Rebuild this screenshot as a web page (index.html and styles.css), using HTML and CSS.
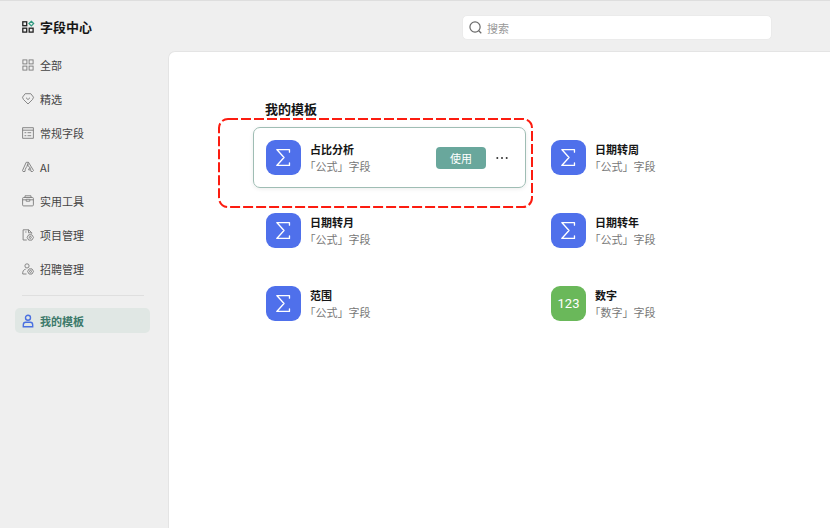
FILE: index.html
```
<!DOCTYPE html>
<html lang="zh-CN">
<head>
<meta charset="utf-8">
<meta name="viewport" content="width=device-width, initial-scale=1">
<title>字段中心</title>
<link rel="stylesheet" href="styles.css">
</head>
<body>
<svg class="defs" width="0" height="0" aria-hidden="true">
  <symbol id="sigma" viewBox="0 0 34 34">
    <path d="M22.800 11.800V9.300H10.500l7 7.700-7 7.700h12.300v-2.500" fill="none" stroke="#fff" stroke-width="1.300" stroke-linejoin="round" stroke-linecap="round"/>
  </symbol>
</svg>
<div class="app">
  <aside class="sidebar">
    <h1 class="brand">
      <svg class="icon" viewBox="0 0 12 12"><g fill="none" stroke="#222" stroke-width="1.300"><rect x=".8" y=".8" width="3.900" height="3.900"/><rect x=".8" y="7.200" width="3.900" height="3.900"/><rect x="7.200" y="7.200" width="3.900" height="3.900"/><path d="M9.300.300 11.600 2.600 9.300 4.900 7 2.600z" stroke="#2f9a80"/></g></svg>
      字段中心
    </h1>
    <nav class="nav">
      <a class="item" href="#"><svg class="icon" viewBox="0 0 12 12"><rect x=".9" y=".9" width="4" height="4"/><rect x="7.100" y=".9" width="4" height="4"/><rect x=".9" y="7.100" width="4" height="4"/><rect x="7.100" y="7.100" width="4" height="4"/></svg>全部</a>
      <a class="item" href="#"><svg class="icon" viewBox="0 0 12 12"><path d="M3.200.700h5.600L11.500 4.200 10.600 6.400 6 11 1.400 6.400.500 4.200zM4 4.700l2 1.900 2-1.900"/></svg>精选</a>
      <a class="item" href="#"><svg class="icon" viewBox="0 0 12 12"><path d="M.6.700h10.800v10.600H.6zM.6 3.200h10.800M2.500 5.700h1.800M5.500 5.700h3.700M2.500 8.700h1.800M5.500 8.700h3.700"/></svg>常规字段</a>
      <a class="item" href="#"><svg class="icon" viewBox="0 0 12 12"><path d="M4.200 1.300h2.300L11.500 9.500 10.600 10.500H9C8.700 7.500 7.500 5.500 5.600 4.300M4.200 1.300 .5 9.500 1 10.500h2C3 7.500 4.500 6 6.500 3.500M6.500 1.300 5 4.700M7.800 6.500 6.500 8.800 8.500 9"/></svg>AI</a>
      <a class="item" href="#"><svg class="icon" viewBox="0 0 12 12"><rect x=".6" y="2.500" width="10.800" height="8.400" rx="1"/><path d="M3 2.500V.8h6v1.700M.6 4.800h3.600M7.800 4.800h3.600M4.200 4.300h3.600v1.900H4.200z"/></svg>实用工具</a>
      <a class="item" href="#"><svg class="icon" viewBox="0 0 12 12"><path d="M4.800 11H1.100V.8h5.600l3 2.900v1M6.500.800v3h3M3.200 3h1.300"/><path d="M6.700 5.800h3.200l1.600 2.600-1.600 2.700H6.700L5.100 8.400z"/><circle cx="8.300" cy="8.400" r="1"/></svg>项目管理</a>
      <a class="item" href="#"><svg class="icon" viewBox="0 0 12 12"><circle cx="5" cy="2.900" r="2.100"/><path d="M4.500 11H.7C.5 8.500 1.500 6.500 3.700 6.200"/><path d="M7.100 5.900h2.900l1.500 2.500L10 11H7.100L5.600 8.400z"/><circle cx="8.500" cy="8.400" r="1"/></svg>招聘管理</a>
      <hr class="rule">
      <a class="item active" href="#" aria-current="page"><svg class="icon" viewBox="0 0 12 12"><circle cx="6" cy="2.700" r="2.500"/><path d="M1.300 11.700v-1.800c0-1.700.900-2.700 2.400-2.700h4.600c1.500 0 2.400 1 2.400 2.700v1.800z"/></svg>我的模板</a>
    </nav>
  </aside>
  <div class="body">
    <header class="topbar">
      <label class="search">
        <svg class="search-icon" viewBox="0 0 14 14" aria-hidden="true"><circle cx="6.500" cy="6.500" r="5.500"/><path d="m10.500 10.500 2.700 2.700"/></svg>
        <input type="search" placeholder="搜索" aria-label="搜索">
      </label>
    </header>
    <main class="panel">
      <h2 class="heading">我的模板</h2>
      <div class="grid">
        <article class="card selected">
          <svg class="tile"><use href="#sigma"/></svg>
          <div class="info"><h3>占比分析</h3><p>「公式」字段</p></div>
          <button class="use" type="button">使用</button>
          <button class="more" type="button" aria-label="更多"><svg viewBox="0 0 12 4"><circle cx="1.300" cy="2" r="1"/><circle cx="6" cy="2" r="1"/><circle cx="10.700" cy="2" r="1"/></svg></button>
          <svg class="marker" aria-hidden="true"><rect width="100%" height="100%" rx="9"/></svg>
        </article>
        <article class="card"><svg class="tile"><use href="#sigma"/></svg><div class="info"><h3>日期转周</h3><p>「公式」字段</p></div></article>
        <article class="card"><svg class="tile"><use href="#sigma"/></svg><div class="info"><h3>日期转月</h3><p>「公式」字段</p></div></article>
        <article class="card"><svg class="tile"><use href="#sigma"/></svg><div class="info"><h3>日期转年</h3><p>「公式」字段</p></div></article>
        <article class="card"><svg class="tile"><use href="#sigma"/></svg><div class="info"><h3>范围</h3><p>「公式」字段</p></div></article>
        <article class="card"><div class="tile number">123</div><div class="info"><h3>数字</h3><p>「数字」字段</p></div></article>
      </div>
    </main>
  </div>
</div>
</body>
</html>
```
FILE: styles.css
```
* { box-sizing: border-box; }
body {
  margin: 0;
  background: #efefef;
  color: #444;
  font: 11px/16px "Noto Sans CJK SC", sans-serif;
}
h1, h2, h3, p { margin: 0; }
button, input { font: inherit; }
.defs { position: absolute; }
.app {
  display: grid;
  grid-template-columns: 168px 1fr;
  min-height: 100vh;
  border-top: 1px solid #dedede;
}
.sidebar { padding: 16px 18px 0 15px; }
.icon { width: 12px; height: 12px; flex: none; overflow: visible; }
.brand {
  display: flex;
  align-items: center;
  gap: 6px;
  padding-left: 7px;
  color: #161616;
  font-size: 13px;
  line-height: 20px;
  font-weight: 700;
}
.nav { display: flex; flex-direction: column; gap: 9px; margin-top: 15px; }
.item {
  display: flex;
  align-items: center;
  gap: 6px;
  height: 25px;
  padding: 0 7px;
  border-radius: 5px;
  color: #444;
  text-decoration: none;
}
.item .icon { fill: none; stroke: #7c7c7c; stroke-width: 0.9; }
.item.active { background: #e0e7e4; color: #3d7a6b; font-weight: 700; }
.item.active .icon { stroke: #4a70e0; stroke-width: 1.4; }
.rule { width: 122px; margin: 5px 0 3px 7px; border: 0; border-top: 1px solid #dfdfdf; }
.body { display: flex; flex-direction: column; }
.topbar { display: flex; justify-content: flex-end; padding: 14px 58px 11px 20px; }
.search {
  display: flex;
  align-items: center;
  gap: 5px;
  flex: 0 1 310px;
  height: 25px;
  padding: 0 6px;
  border: 1px solid #ebebeb;
  border-radius: 5px;
  background: #fff;
}
.search-icon { width: 13px; height: 13px; flex: none; fill: none; stroke: #6a6a6a; stroke-width: 1.3; }
.search input { flex: 1; min-width: 0; padding: 0; border: 0; outline: 0; background: none; color: #444; }
.search input::placeholder { color: #999; opacity: 1; }
.panel {
  flex: 1;
  padding: 47px 19px 20px 84px;
  border: solid #e4e4e4;
  border-width: 1px 0 0 1px;
  border-radius: 7px 0 0 0;
  background: #fff;
}
.heading { padding-left: 12px; color: #161616; font-size: 13px; line-height: 20px; }
.grid { display: grid; grid-template-columns: 1fr 1fr; gap: 12px; margin-top: 8px; }
.card {
  position: relative;
  display: flex;
  align-items: center;
  height: 61px;
  padding: 0 17px 0 12px;
  border: 1px solid transparent;
  border-radius: 7px;
}
.selected { border-color: #9fbdb4; box-shadow: 0 1px 4px #00000014; }
.tile { width: 35px; height: 35px; flex: none; border-radius: 9px; background: #4f70eb; }
.number {
  background: #6ab85a;
  color: #fff;
  font: 13px/35px Roboto, sans-serif;
  text-align: center;
}
.info { flex: 1; padding-left: 9px; }
.info h3 { color: #161616; font-size: 11px; line-height: 17px; }
.info p { color: #777; line-height: 17px; text-spacing-trim: trim-start; }
.use { width: 50px; height: 22px; padding: 0; border: 0; border-radius: 4px; background: #69a79c; color: #fff; }
.more { display: flex; margin-left: 10px; padding: 0; border: 0; background: none; }
.more svg { width: 12px; height: 4px; fill: #333; }
.marker { position: absolute; top: -9px; left: -35px; width: calc(100% + 42px); height: calc(100% + 29px); overflow: visible; pointer-events: none; }
.marker rect { fill: none; stroke: #fc1c10; stroke-width: 2; stroke-dasharray: 10 3; }
```
